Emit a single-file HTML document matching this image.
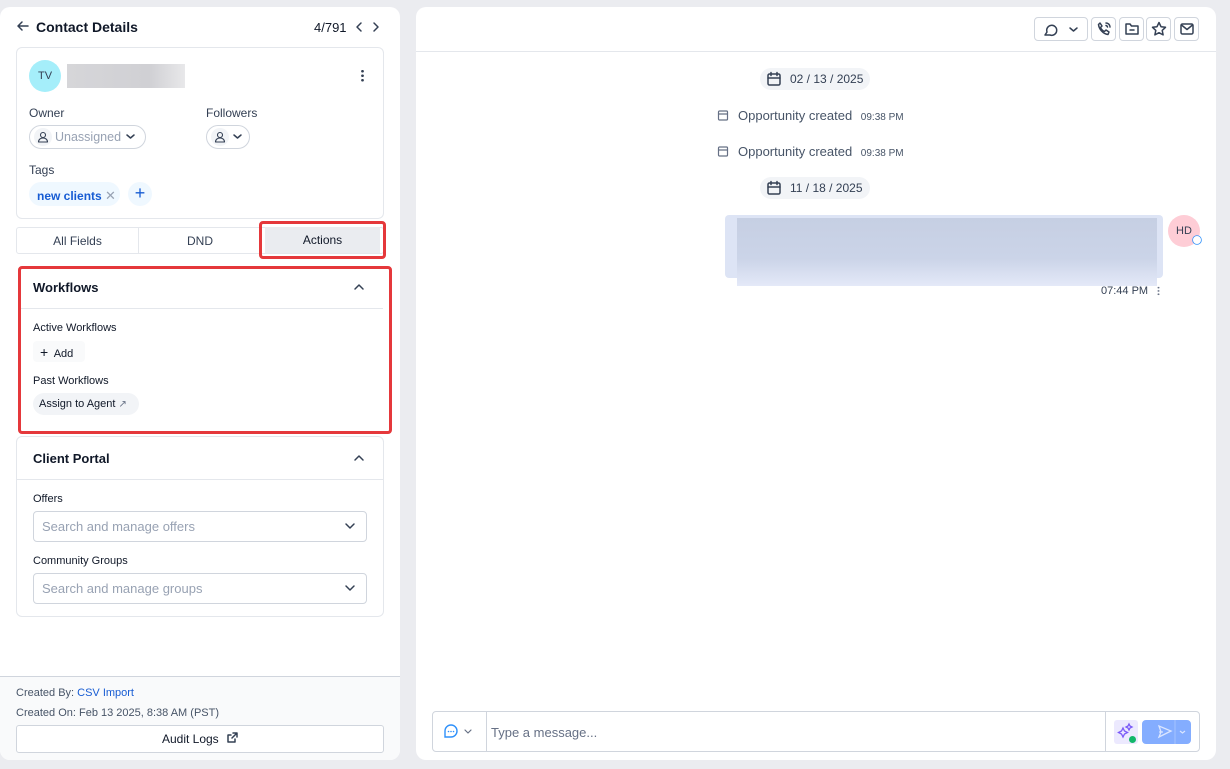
<!DOCTYPE html>
<html><head><meta charset="utf-8"><style>
*{box-sizing:border-box;margin:0;padding:0}
body{width:1230px;height:769px;background:#ebecf0;font-family:"Liberation Sans",sans-serif;color:#101828;position:relative;overflow:hidden;font-size:13px}
.a{position:absolute}
.panel{background:#fff;border-radius:10px}
.lbl{font-size:12px;color:#344054}
.pill{border:1px solid #d0d5dd;border-radius:14px;display:flex;align-items:center}
.ic{stroke:#344054;fill:none;stroke-width:1.5;stroke-linecap:round;stroke-linejoin:round}
.ph{color:#98a2b3;font-size:13px}
.sel{border:1px solid #d0d5dd;border-radius:4px;height:31px;display:flex;align-items:center;padding-left:8px}
.tb{width:25px;height:24px;border:1px solid #d0d5dd;border-radius:4px;display:flex;align-items:center;justify-content:center}
.gray{color:#475467}
</style></head><body>
<div class="a panel" style="left:0;top:7px;width:400px;height:753px;overflow:hidden">
 <div class="a" style="left:0;top:669px;width:400px;height:84px;background:#f9fafb;border-top:1px solid #d0d5dd"></div>
</div>
<!-- header -->
<svg class="a" style="left:16px;top:19px" width="14" height="14" viewBox="0 0 14 14"><path class="ic" d="M12 7H2M6 3L2 7l4 4"/></svg>
<div class="a" style="left:36px;top:19px;font-size:14px;font-weight:bold">Contact Details</div>
<div class="a" style="left:314px;top:20px;font-size:13px">4/791</div>
<svg class="a" style="left:354px;top:21px" width="30" height="12"><path class="ic" d="M7 2L3 6l4 4M20 2l4 4-4 4"/></svg>
<!-- contact card -->
<div class="a" style="left:16px;top:47px;width:368px;height:172px;border:1px solid #e4e7ec;border-radius:6px"></div>
<div class="a" style="left:29px;top:60px;width:32px;height:32px;border-radius:50%;background:#a5eefa;font-size:11px;display:flex;align-items:center;justify-content:center;color:#344054">TV</div>
<div class="a" style="left:67px;top:64px;width:118px;height:24px;background:linear-gradient(90deg,#d6d6d9,#d0d0d4 70%,#e8e8ea)"></div>
<div class="a" style="left:361px;top:69px;width:3px;height:13px;background:radial-gradient(circle,#344054 1.2px,transparent 1.5px) 0 0/3px 4.5px"></div>
<div class="a lbl" style="left:29px;top:106px">Owner</div>
<div class="a lbl" style="left:206px;top:106px">Followers</div>
<div class="a pill" style="left:29px;top:125px;width:117px;height:24px;padding-left:4px">
 <div style="width:18px;height:18px;border-radius:50%;background:#f2f4f7;display:flex;align-items:center;justify-content:center"><svg width="12" height="12"><circle class="ic" cx="6" cy="4" r="2.5" style="stroke-width:1.1"/><path class="ic" style="stroke-width:1.1" d="M1.5 11c0-2.5 2-4 4.5-4s4.5 1.5 4.5 4z"/></svg></div>
 <span class="ph" style="margin-left:3px;font-size:12.5px;white-space:nowrap">Unassigned</span>
 <svg width="14" height="10" style="margin-left:3px;flex:none"><path class="ic" d="M3 3l3.5 3L10 3"/></svg></div>
<div class="a pill" style="left:206px;top:125px;width:44px;height:24px;padding-left:4px">
 <div style="width:18px;height:18px;border-radius:50%;background:#f2f4f7;display:flex;align-items:center;justify-content:center"><svg width="12" height="12"><circle class="ic" cx="6" cy="4" r="2.5" style="stroke-width:1.1"/><path class="ic" style="stroke-width:1.1" d="M1.5 11c0-2.5 2-4 4.5-4s4.5 1.5 4.5 4z"/></svg></div>
 <svg width="14" height="10" style="margin-left:2px"><path class="ic" d="M3 3l3.5 3L10 3"/></svg></div>
<div class="a lbl" style="left:29px;top:163px">Tags</div>
<div class="a" style="left:29px;top:182px;width:91px;height:24px;border-radius:12px;background:#eff8ff;color:#175cd3;font-size:12px;font-weight:bold;padding:6px 0 0 8px">new clients <span style="color:#98a2b3;font-weight:normal;font-size:13px">&#x2715;</span></div>
<div class="a" style="left:128px;top:182px;width:24px;height:24px;border-radius:50%;background:#eff8ff;color:#175cd3;font-size:18px;text-align:center;line-height:23px">+</div>
<!-- tabs -->
<div class="a" style="left:16px;top:227px;width:368px;height:27px;border:1px solid #e4e7ec;border-radius:3px;display:flex;font-size:12px;color:#344054">
 <div style="width:122px;text-align:center;line-height:26px;border-right:1px solid #e4e7ec">All Fields</div>
 <div style="width:122px;text-align:center;line-height:26px">DND</div>
</div>
<div class="a" style="left:259px;top:221px;width:127px;height:38px;border:3px solid #e5383b;border-radius:4px;padding:3px 3px 3px 3px"><div style="background:#eaecf0;height:100%;text-align:center;line-height:27px;font-size:12px;color:#101828">Actions</div></div>
<!-- workflows -->
<div class="a" style="left:18px;top:266px;width:374px;height:168px;border:3px solid #e5383b;border-radius:4px"></div>
<div class="a" style="left:33px;top:280px;font-size:13px;font-weight:bold">Workflows</div>
<svg class="a" style="left:352px;top:282px" width="14" height="10"><path class="ic" d="M3 7l4-4 4 4"/></svg>
<div class="a" style="left:21px;top:308px;width:362px;height:1px;background:#e4e7ec"></div>
<div class="a" style="left:33px;top:322px;font-size:11px;color:#101828">Active Workflows</div>
<div class="a" style="left:33px;top:341px;width:52px;height:21px;background:#f9fafb;border-radius:4px;font-size:11px;padding:3px 0 0 7px"><span style="font-size:14px">+</span>&nbsp; Add</div>
<div class="a" style="left:33px;top:375px;font-size:11px;color:#101828">Past Workflows</div>
<div class="a" style="left:33px;top:393px;width:106px;height:22px;background:#f2f4f7;border-radius:11px;font-size:11px;padding:5px 0 0 6px">Assign to Agent <span style="color:#667085;font-size:10px">&#x2197;</span></div>
<!-- client portal -->
<div class="a" style="left:16px;top:436px;width:368px;height:181px;border:1px solid #e4e7ec;border-radius:6px"></div>
<div class="a" style="left:33px;top:451px;font-size:13px;font-weight:bold">Client Portal</div>
<svg class="a" style="left:352px;top:453px" width="14" height="10"><path class="ic" d="M3 7l4-4 4 4"/></svg>
<div class="a" style="left:17px;top:479px;width:366px;height:1px;background:#e4e7ec"></div>
<div class="a" style="left:33px;top:493px;font-size:11px">Offers</div>
<div class="a sel ph" style="left:33px;top:511px;width:334px">Search and manage offers</div>
<svg class="a" style="left:343px;top:521px" width="14" height="10"><path class="ic" d="M3 3l4 4 4-4"/></svg>
<div class="a" style="left:33px;top:555px;font-size:11px">Community Groups</div>
<div class="a sel ph" style="left:33px;top:573px;width:334px">Search and manage groups</div>
<svg class="a" style="left:343px;top:583px" width="14" height="10"><path class="ic" d="M3 3l4 4 4-4"/></svg>
<!-- footer -->
<div class="a gray" style="left:16px;top:687px;font-size:11px">Created By: <span style="color:#175cd3">CSV Import</span></div>
<div class="a gray" style="left:16px;top:707px;font-size:11px">Created On: Feb 13 2025, 8:38 AM (PST)</div>
<div class="a" style="left:16px;top:725px;width:368px;height:28px;border:1px solid #d0d5dd;border-radius:3px;background:#fff;text-align:center;line-height:27px;font-size:12px">Audit Logs <svg width="12" height="12" style="vertical-align:-1px;margin-left:4px"><path class="ic" d="M9 7v3H2V3h3M7 1h4v4M11 1L6 6"/></svg></div>

<!-- right panel -->
<div class="a panel" style="left:416px;top:7px;width:800px;height:753px"></div>
<div class="a" style="left:416px;top:51px;width:800px;height:1px;background:#e4e7ec"></div>
<div class="a" style="left:1034px;top:17px;width:54px;height:24px;border:1px solid #d0d5dd;border-radius:4px"><svg style="margin:4px 0 0 7px" width="40" height="16"><path class="ic" d="M3 13l2-3a5 5 0 1 1 3 3zM28 6l3.5 3L35 6"/></svg></div>
<div class="a tb" style="left:1091px;top:17px"><svg width="16" height="16"><path class="ic" d="M4 2l2 3-1.5 1.5a8 8 0 0 0 4 4L10 9l3 2-1 2.5C7 13 3 8 2.5 3.5zM10 2a4 4 0 0 1 4 4M10 4.5a2 2 0 0 1 1.5 1.5"/></svg></div>
<div class="a tb" style="left:1119px;top:17px"><svg width="16" height="16"><path class="ic" d="M2 3h4l1.5 2H14v8H2zM6 9h4"/></svg></div>
<div class="a tb" style="left:1146px;top:17px"><svg width="16" height="16"><path class="ic" d="M8 1.5l2 4.2 4.5.6-3.3 3.1.9 4.5L8 11.7l-4.1 2.2.9-4.5L1.5 6.3 6 5.7z"/></svg></div>
<div class="a tb" style="left:1174px;top:17px"><svg width="16" height="16"><rect class="ic" x="2" y="3" width="12" height="10" rx="1.5"/><path class="ic" d="M2.5 4l5.5 4.5L13.5 4"/></svg></div>

<div class="a" style="left:760px;top:68px;width:110px;height:22px;background:#f2f4f7;border-radius:11px;font-size:12px;color:#344054;padding:4px 0 0 30px">02 / 13 / 2025</div>
<svg class="a" style="left:766px;top:71px" width="16" height="16"><rect class="ic" x="2" y="3" width="12" height="11" rx="1.5"/><path class="ic" d="M2 7h12M5 1.5v3M11 1.5v3"/></svg>
<svg class="a" style="left:717px;top:109px" width="12" height="12"><rect class="ic" style="stroke:#667085;stroke-width:1.2" x="1.5" y="2" width="9" height="9" rx="1"/><path class="ic" style="stroke:#667085;stroke-width:1.2" d="M1.5 5h9"/></svg>
<div class="a" style="left:738px;top:108px;font-size:13px;color:#475467">Opportunity created <span style="font-size:10px;margin-left:5px">09:38 PM</span></div>
<svg class="a" style="left:717px;top:145px" width="12" height="12"><rect class="ic" style="stroke:#667085;stroke-width:1.2" x="1.5" y="2" width="9" height="9" rx="1"/><path class="ic" style="stroke:#667085;stroke-width:1.2" d="M1.5 5h9"/></svg>
<div class="a" style="left:738px;top:144px;font-size:13px;color:#475467">Opportunity created <span style="font-size:10px;margin-left:5px">09:38 PM</span></div>
<div class="a" style="left:760px;top:177px;width:110px;height:22px;background:#f2f4f7;border-radius:11px;font-size:12px;color:#344054;padding:4px 0 0 30px">11 / 18 / 2025</div>
<svg class="a" style="left:766px;top:180px" width="16" height="16"><rect class="ic" x="2" y="3" width="12" height="11" rx="1.5"/><path class="ic" d="M2 7h12M5 1.5v3M11 1.5v3"/></svg>

<div class="a" style="left:725px;top:215px;width:438px;height:63px;background:#dde4f5;border-radius:4px"></div>
<div class="a" style="left:737px;top:218px;width:420px;height:68px;background:linear-gradient(180deg,#c6cfe3,#cbd4e8 60%,#e4e9f8)"></div>
<div class="a" style="left:1168px;top:215px;width:32px;height:32px;border-radius:50%;background:#fecdd6;font-size:11px;color:#344054;text-align:center;line-height:32px">HD</div>
<div class="a" style="left:1191px;top:234px;width:12px;height:12px;border-radius:50%;background:#fff;border:1px solid #2e90fa;transform:scale(.8)"></div>
<div class="a" style="left:1101px;top:285px;font-size:11px;color:#344054">07:44 PM</div>
<div class="a" style="left:1157px;top:286px;width:3px;height:10px;background:radial-gradient(circle,#667085 .8px,transparent 1px) 0 0/3px 3.3px"></div>

<!-- composer -->
<div class="a" style="left:432px;top:711px;width:768px;height:41px;border:1px solid #d0d5dd;border-radius:4px"></div>
<div class="a" style="left:486px;top:712px;width:1px;height:39px;background:#d0d5dd"></div>
<div class="a" style="left:1105px;top:712px;width:1px;height:39px;background:#d0d5dd"></div>
<svg class="a" style="left:443px;top:724px" width="34" height="16"><path d="M2 13V7a6 6 0 0 1 12 0v0a6 6 0 0 1-6 6z" fill="none" stroke="#2e90fa" stroke-width="1.4"/><path d="M5.5 7.5h.01M8 7.5h.01M10.5 7.5h.01" stroke="#2e90fa" stroke-width="1.6" stroke-linecap="round"/><path class="ic" style="stroke:#667085;stroke-width:1.2" d="M22 6l3 3 3-3"/></svg>
<div class="a" style="left:491px;top:725px;font-size:13px;color:#667085">Type a message...</div>
<div class="a" style="left:1114px;top:720px;width:24px;height:24px;background:#ece9fe;border-radius:3px"><svg width="24" height="24"><path d="M9 8l1.5 3 3 1.5-3 1.5L9 17l-1.5-3-3-1.5 3-1.5zM15 4l1 2 2 1-2 1-1 2-1-2-2-1 2-1z" fill="none" stroke="#7a5af8" stroke-width="1.3"/></svg></div>
<div class="a" style="left:1129px;top:736px;width:7px;height:7px;border-radius:50%;background:#12b76a"></div>
<div class="a" style="left:1142px;top:720px;width:49px;height:24px;background:#84adff;border-radius:4px"><svg width="49" height="24"><path d="M19 12l-2-6 12 5-12 6zM17 12h4" fill="none" stroke="#dbe6ff" stroke-width="1.3"/><path d="M33 0v24" stroke="#a4c2ff"/><path d="M38 11l2.5 2 2.5-2" fill="none" stroke="#dbe6ff" stroke-width="1.2"/></svg></div>
</body></html>
